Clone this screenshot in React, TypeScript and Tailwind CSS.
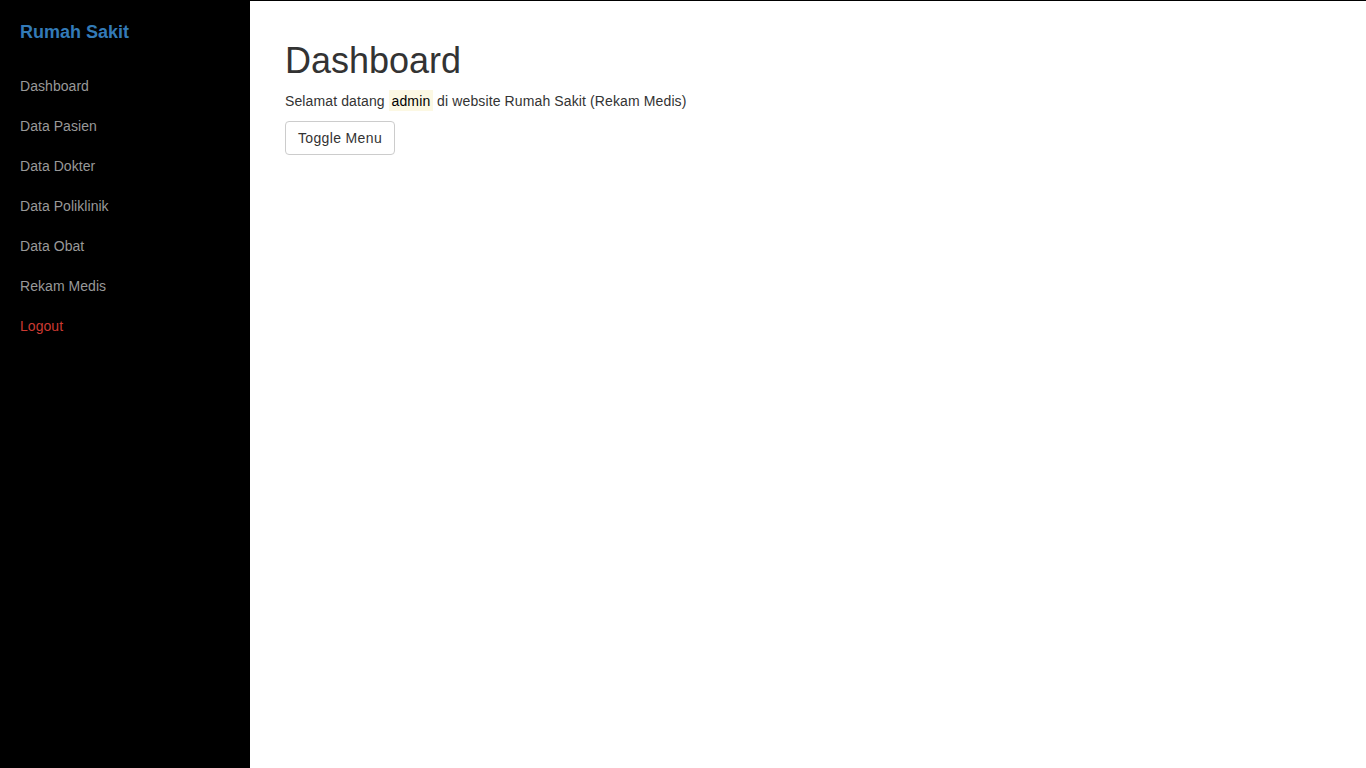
import { useState } from "react";

const menu = [
  "Dashboard",
  "Data Pasien",
  "Data Dokter",
  "Data Poliklinik",
  "Data Obat",
  "Rekam Medis",
];

export default function App() {
  const [open, setOpen] = useState(true);

  return (
    <div
      className="flex min-h-screen border-t border-black bg-white text-[14px] tracking-[0.12px] text-[#333]"
      style={{ fontFamily: '"Liberation Sans", Arial, sans-serif' }}
    >
      {open ? (
        <aside className="w-[250px] shrink-0 bg-black tracking-[0.05px]">
          <div className="h-[65px] pl-5 text-[18px] font-bold leading-[62px] tracking-normal text-[#337ab7]">
            Rumah Sakit
          </div>
          <ul>
            {menu.map((label) => (
              <li key={label}>
                <a className="block pl-5 leading-[40px] text-[#999] hover:text-white" href="#">
                  {label}
                </a>
              </li>
            ))}
            <li>
              <a className="block pl-5 leading-[40px] text-[#cc3a32]" href="#">
                Logout
              </a>
            </li>
          </ul>
        </aside>
      ) : null}

      <main className="flex-1 px-[35px] pt-5">
        <h1 className="mt-5 mb-[10px] text-[36px] leading-[1.1] font-normal tracking-normal">
          Dashboard
        </h1>
        <p className="mb-[10px] leading-5">
          Selamat datang{" "}
          <mark className="bg-[#fcf8e3] px-[0.2em] py-[0.2em] text-black">admin</mark>{" "}
          di website Rumah Sakit (Rekam Medis)
        </p>
        <button
          className="h-[34px] rounded border border-[#ccc] bg-white px-3 leading-5 tracking-[0.35px] hover:bg-[#e6e6e6]"
          onClick={() => setOpen((value) => !value)}
          type="button"
        >
          Toggle Menu
        </button>
      </main>
    </div>
  );
}
